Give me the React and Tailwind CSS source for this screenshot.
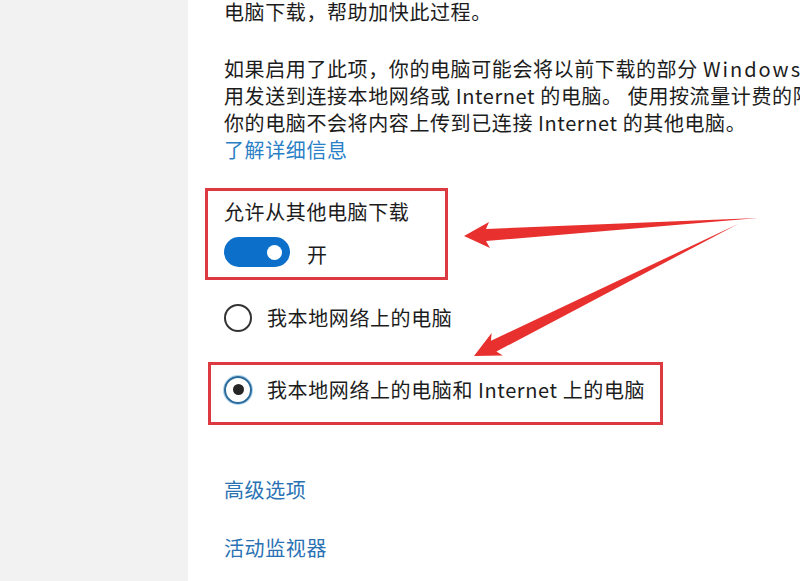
import React from "react";

function Arrows() {
  return (
    <svg className="pointer-events-none absolute inset-0" width="800" height="581" viewBox="0 0 800 581">
      <polygon
        fill="#e8312f"
        points="464,236 489,222 486,229 758,218 486,241 490,248"
      />
      <polygon
        fill="#e8312f"
        points="474,356 491.6,333.1 491,340.7 738,224 496.4,351.5 502.8,355.5"
      />
    </svg>
  );
}

export default function App() {
  return (
    <div className="relative flex w-[800px] h-[581px] overflow-hidden bg-white font-['Noto_Sans_CJK_SC',sans-serif] text-[20px] leading-[27px] tracking-[0.6px] text-[#1c1c1c]">
      <div className="w-[188px] shrink-0 bg-[#f2f2f2]" />

      <div className="flex-1 whitespace-nowrap pl-[36px]">
        <p className="-mt-[2px]">电脑下载，帮助加快此过程。</p>

        <div className="mt-[30px]">
          <p>
            如果启用了此项，你的电脑可能会将以前下载的部分 <span className="tracking-[2px]">Windows</span> 更新和应
          </p>
          <p>用发送到连接本地网络或 Internet 的电脑。 使用按流量计费的限</p>
          <p>你的电脑不会将内容上传到已连接 Internet 的其他电脑。</p>
          <a className="block text-[#2a80c6]">了解详细信息</a>
        </div>

        {/* toggle, boxed */}
        <div className="mt-[24.5px] -ml-[19px] h-[92px] w-[243px] border-[3px] border-[#dc3a40] pl-[16px] pt-[7.5px]">
          <p>允许从其他电脑下载</p>
          <div className="mt-[11.5px] flex items-center gap-[17px]">
            <div className="flex h-[30px] w-[66px] items-center justify-end rounded-full bg-[#0c6fca] pr-[8px]">
              <div className="h-[15px] w-[15px] rounded-full bg-white" />
            </div>
            <span className="mt-[4px]">开</span>
          </div>
        </div>

        <div className="mt-[24px] flex items-center gap-[15px]">
          <div className="h-[28px] w-[28px] rounded-full border-2 border-[#333]" />
          <span>我本地网络上的电脑</span>
        </div>

        <div className="mt-[30px] -ml-[16px] h-[63px] w-[455px] border-[3px] border-[#dc3a40] pl-[13px] pt-[11px]">
          <div className="flex h-[28px] items-center gap-[15px]">
            <div className="flex h-[28px] w-[28px] items-center justify-center rounded-full border-2 border-[#2a6b9b] shadow-[0_0_0_1px_#a9d2ee]">
              <div className="h-[11px] w-[11px] rounded-full bg-[#262626]" />
            </div>
            <span>我本地网络上的电脑和 Internet 上的电脑</span>
          </div>
        </div>

        <a className="mt-[51.5px] block text-[#2a72b4]">高级选项</a>
        <a className="mt-[31px] block text-[#2a72b4]">活动监视器</a>
      </div>

      <Arrows />
    </div>
  );
}
